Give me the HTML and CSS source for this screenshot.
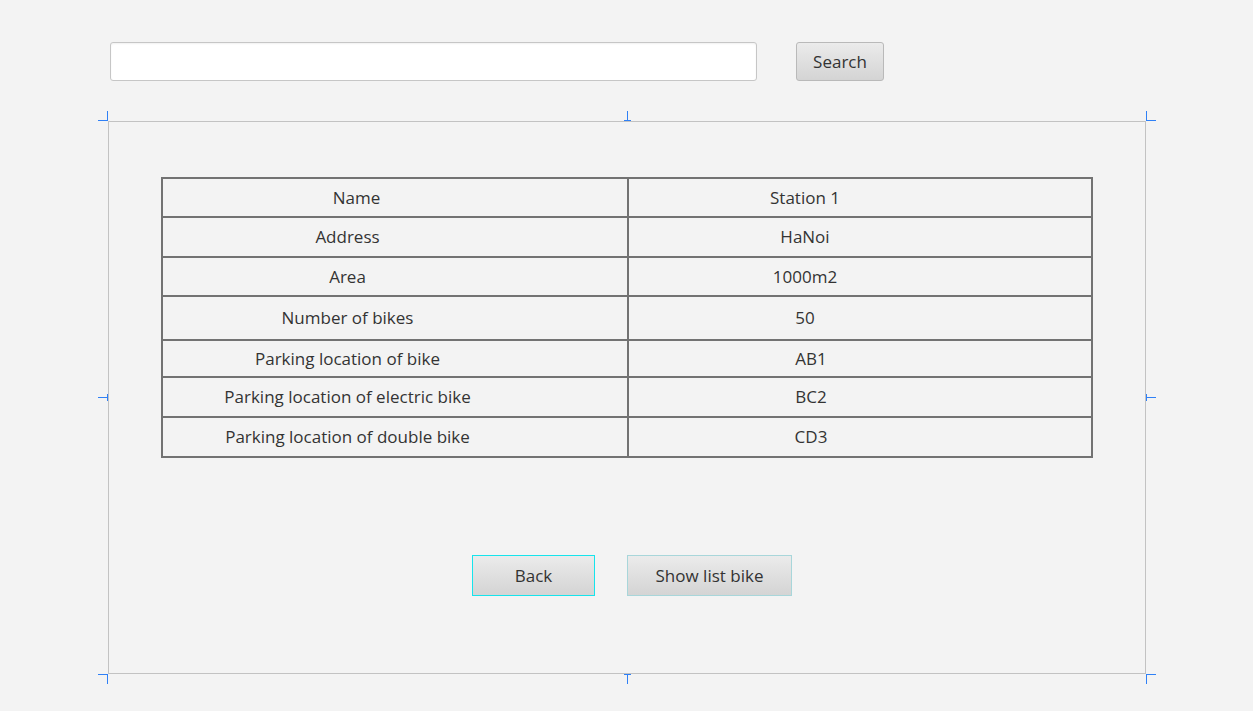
FILE: index.html
```html
<!DOCTYPE html>
<html>
<head>
<meta charset="utf-8">
<link rel="stylesheet" href="styles.css">
</head>
<body>
<div class="topbar">
  <input class="search-input" type="text">
  <button class="btn search-btn">Search</button>
</div>
<div class="frame">
  <span class="h h-tl-a"></span><span class="h h-tl-b"></span>
  <span class="h h-tm-a"></span><span class="h h-tm-b"></span>
  <span class="h h-tr-a"></span><span class="h h-tr-b"></span>
  <span class="h h-ml-a"></span><span class="h h-ml-b"></span>
  <span class="h h-mr-a"></span><span class="h h-mr-b"></span>
  <span class="h h-bl-a"></span><span class="h h-bl-b"></span>
  <span class="h h-bm-a"></span><span class="h h-bm-b"></span>
  <span class="h h-br-a"></span><span class="h h-br-b"></span>

  <div class="grid">
    <div class="cell l name">Name</div><div class="cell v">Station 1</div>
    <div class="cell l">Address</div><div class="cell v">HaNoi</div>
    <div class="cell l">Area</div><div class="cell v">1000m2</div>
    <div class="cell l">Number of bikes</div><div class="cell v">50</div>
    <div class="cell l">Parking location of bike</div><div class="cell v code">AB1</div>
    <div class="cell l">Parking location of electric bike</div><div class="cell v code">BC2</div>
    <div class="cell l">Parking location of double bike</div><div class="cell v code">CD3</div>
  </div>

  <div class="actions">
    <button class="btn back-btn">Back</button>
    <button class="btn list-btn">Show list bike</button>
  </div>
</div>
</body>
</html>
```

FILE: styles.css
```css
html, body {
  margin: 0;
  padding: 0;
  background: #f3f3f3;
  font-family: "Open Sans", "Noto Sans", sans-serif;
  color: #333333;
}

body {
  min-height: 711px;
}

.topbar {
  display: flex;
  align-items: flex-start;
  padding: 42px 0 0 110px;
  gap: 39px;
  height: 39px;
}

.search-input {
  box-sizing: border-box;
  width: 647px;
  height: 39px;
  margin: 0;
  border: 1px solid #c6c6c6;
  border-radius: 3px;
  background: #ffffff;
  box-shadow: inset 0 1px 2px rgba(0,0,0,0.06);
  outline: none;
}

.btn {
  box-sizing: border-box;
  margin: 0;
  padding: 0;
  font-family: "Open Sans", "Noto Sans", sans-serif;
  font-size: 17px;
  color: #333333;
  background: linear-gradient(#ebebeb, #d4d4d4);
  border: 1px solid #b9b9b9;
  border-radius: 3px;
  cursor: default;
}

.search-btn {
  width: 88px;
  height: 39px;
}

.frame {
  position: relative;
  box-sizing: border-box;
  width: 1038px;
  height: 553px;
  margin: 40px 0 37px 108px;
  border: 1px solid #c2c2c2;
  padding: 55px 0 0 52px;
}

.h {
  position: absolute;
  background: #2f80f6;
  display: block;
}
/* top-left */
.h-tl-a { left: -11px; top: -2px; width: 10px; height: 1px; }
.h-tl-b { left: -2px; top: -11px; width: 1px; height: 10px; }
/* top-middle */
.h-tm-a { left: 518px; top: -11px; width: 1px; height: 10px; }
.h-tm-b { left: 515px; top: -2px; width: 7px; height: 1px; }
/* top-right */
.h-tr-a { left: calc(100% + 1px); top: -11px; width: 1px; height: 10px; }
.h-tr-b { left: calc(100% + 1px); top: -2px; width: 10px; height: 1px; }
/* middle-left */
.h-ml-a { left: -11px; top: 275px; width: 10px; height: 1px; }
.h-ml-b { left: -2px; top: 272px; width: 1px; height: 7px; }
/* middle-right */
.h-mr-a { left: calc(100% + 1px); top: 275px; width: 10px; height: 1px; }
.h-mr-b { left: calc(100% + 1px); top: 272px; width: 1px; height: 7px; }
/* bottom-left */
.h-bl-a { left: -11px; top: calc(100% + 1px); width: 10px; height: 1px; }
.h-bl-b { left: -2px; top: calc(100% + 1px); width: 1px; height: 10px; }
/* bottom-middle */
.h-bm-a { left: 518px; top: calc(100% + 1px); width: 1px; height: 10px; }
.h-bm-b { left: 515px; top: calc(100% + 1px); width: 7px; height: 1px; }
/* bottom-right */
.h-br-a { left: calc(100% + 1px); top: calc(100% + 1px); width: 1px; height: 10px; }
.h-br-b { left: calc(100% + 1px); top: calc(100% + 1px); width: 10px; height: 1px; }

.grid {
  display: grid;
  grid-template-columns: 464px 462px;
  grid-template-rows: 37px 38px 37px 42px 35px 38px 38px;
  gap: 2px;
  padding: 2px;
  width: 932px;
  box-sizing: border-box;
  background: #727272;
}

.cell {
  background: #f3f3f3;
  display: flex;
  align-items: center;
  justify-content: center;
  font-size: 17px;
  line-height: 1;
  white-space: nowrap;
  padding-bottom: 1px;
}

.cell.l { padding-right: 95px; }
.cell.l.name { padding-right: 77px; }
.cell.v { padding-right: 110px; }
.cell.v.code { padding-right: 98px; }

.actions {
  display: flex;
  gap: 32px;
  margin: 97px 0 0 311px;
}

.back-btn {
  width: 123px;
  height: 41px;
  border-color: #16e4ec;
  border-radius: 0;
}

.list-btn {
  width: 165px;
  height: 41px;
  border-color: #a8d6da;
  border-radius: 0;
}
```
